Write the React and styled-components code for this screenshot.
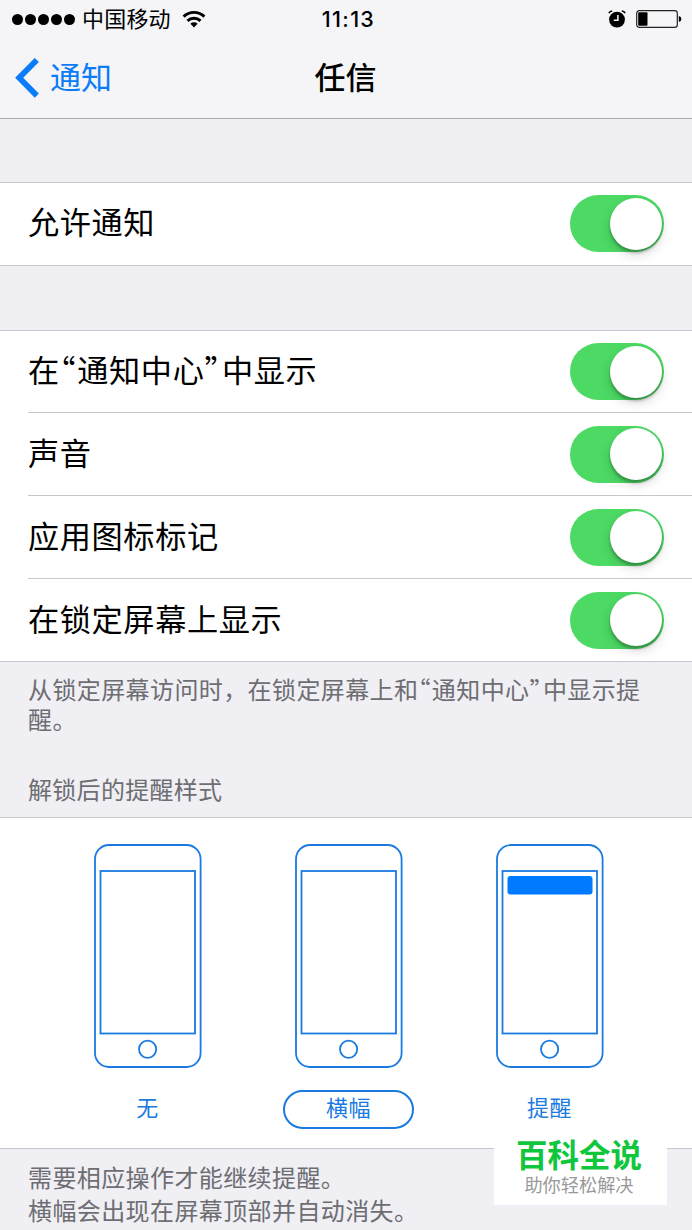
import React from 'react';
import { styled, createGlobalStyle } from 'styled-components';

const GlobalStyle = createGlobalStyle`
  * {
    box-sizing: border-box;
  }
  body {
    margin: 0;
    background: #efeff4;
    color: #000;
    font-family: 'Noto Sans CJK SC', sans-serif;
  }
`;

const displayOptions = [
  { id: 'center', label: '在“通知中心”中显示' },
  { id: 'sound', label: '声音' },
  { id: 'badge', label: '应用图标标记' },
  { id: 'lock', label: '在锁定屏幕上显示' },
];

const alertStyles = [
  { id: 'none', label: '无' },
  { id: 'banner', label: '横幅', selected: true },
  { id: 'alert', label: '提醒', banner: true },
];

// * 弯引号在中文字体里是全角，这里单独换成半角宽度
const QuotedText = ({ text }) =>
  text.split(/([“”])/).map((part, i) => (/[“”]/.test(part) ? <Quote key={i}>{part}</Quote> : part));

const WifiIcon = () => (
  <svg width="24" height="18" viewBox="0 0 24 18" fill="none" stroke="#000" strokeWidth="2.9">
    <path d="M1.6 6.6a15 15 0 0 1 20.8 0" />
    <path d="M5.5 10.9a9.4 9.4 0 0 1 13 0" />
    <path d="M12 17.4l-3.6-3.6a5.2 5.2 0 0 1 7.2 0z" fill="#000" stroke="none" />
  </svg>
);

const AlarmIcon = () => (
  <svg width="18" height="18" viewBox="0 0 18 18" fill="none">
    <circle cx="9" cy="9.6" r="7.9" fill="#000" />
    <path d="M0.8 3.2Q1.9 1.2 4.2 0.9M17.2 3.2Q16.1 1.2 13.8 0.9" stroke="#000" strokeWidth="1.5" />
    <path d="M9.9 5v5.2H5.8" stroke="#f5f5f7" strokeWidth="1.5" />
  </svg>
);

const BatteryIcon = () => (
  <svg width="46" height="18" viewBox="0 0 46 18" fill="none">
    <rect x="0.7" y="0.7" width="40.6" height="16.6" rx="2.6" stroke="#222" strokeWidth="1.2" />
    <rect x="2.2" y="2.2" width="9.3" height="13.6" rx="1" fill="#000" />
    <path d="M42.8 6q2.6.6 2.6 3t-2.6 3z" fill="#000" />
  </svg>
);

const BackIcon = () => (
  <svg width="24" height="40" viewBox="0 0 24 40" fill="none" stroke="#0a7cf8" strokeWidth="5.8">
    <path d="M21.8 2L4.2 19.8l17.6 17.8" />
  </svg>
);

const PhoneIcon = ({ banner }) => (
  <svg width="108" height="224" viewBox="0 0 108 224" fill="none" stroke="#1a7ae0" strokeWidth="1.8">
    <rect x="1" y="1" width="105.6" height="222" rx="14" />
    <rect x="6.5" y="27" width="94.5" height="162.5" />
    <circle cx="53.6" cy="205.2" r="8.6" />
    {banner && <rect x="11.5" y="32" width="85" height="18.5" rx="3" fill="#007aff" stroke="none" />}
  </svg>
);

const ToggleRow = ({ label }) => (
  <RowDiv>
    <RowLabel>
      <QuotedText text={label} />
    </RowLabel>
    <SwitchButton type="button" role="switch" aria-checked="true" aria-label={label}>
      <Knob />
    </SwitchButton>
  </RowDiv>
);

const App = () => {
  return (
    <Page>
      <GlobalStyle />
      <Header>
        <StatusBar>
          <CarrierDiv>
            <SignalDiv>
              {[1, 2, 3, 4, 5].map((n) => (
                <Dot key={n} />
              ))}
            </SignalDiv>
            <span>中国移动</span>
            <WifiIcon />
          </CarrierDiv>
          <Time>11:13</Time>
          <BatteryDiv>
            <AlarmIcon />
            <BatteryIcon />
          </BatteryDiv>
        </StatusBar>
        <NavBar>
          <BackButton type="button">
            <BackIcon />
            <span>通知</span>
          </BackButton>
          <Title>任信</Title>
        </NavBar>
      </Header>

      <AllowGroup>
        <ToggleRow label="允许通知" />
      </AllowGroup>

      <OptionGroup>
        {displayOptions.map((item) => (
          <ToggleRow key={item.id} label={item.label} />
        ))}
      </OptionGroup>

      <GroupNote>
        <QuotedText text="从锁定屏幕访问时，在锁定屏幕上和“通知中心”中显示提醒。" />
      </GroupNote>
      <GroupTitle>解锁后的提醒样式</GroupTitle>

      <StyleGroup>
        {alertStyles.map((item) => (
          <StyleOption key={item.id}>
            <PhoneIcon banner={item.banner} />
            <StyleLabel $selected={item.selected}>{item.label}</StyleLabel>
          </StyleOption>
        ))}
      </StyleGroup>

      <BottomNote>
        <p>需要相应操作才能继续提醒。</p>
        <p>横幅会出现在屏幕顶部并自动消失。</p>
      </BottomNote>

      <Watermark>
        <WatermarkName>百科全说</WatermarkName>
        <WatermarkSlogan>助你轻松解决</WatermarkSlogan>
      </Watermark>
    </Page>
  );
};

export default App;

const Page = styled.div`
  position: relative;
  width: 692px;
  height: 1230px;
  overflow: hidden;
  background: #efeff4;
`;

const Header = styled.header`
  height: 119px;
  background: #f5f5f7;
  border-bottom: 1px solid #acacae;
`;

const StatusBar = styled.div`
  height: 38px;
  padding: 0 10px 0 12px;
  display: grid;
  grid-template-columns: 1fr auto 1fr;
  align-items: center;
`;

const CarrierDiv = styled.div`
  display: flex;
  align-items: center;
  font-size: 22px;
  line-height: 34px;
  letter-spacing: 0.2px;
  & span {
    margin: 0 11px 0 7px;
    padding-bottom: 4px;
  }
`;

const SignalDiv = styled.div`
  display: flex;
  gap: 2px;
`;

const Dot = styled.i`
  width: 11px;
  height: 11px;
  border-radius: 50%;
  background: #000;
`;

const Time = styled.div`
  padding-left: 3px;
  font-family: Inter, sans-serif;
  font-size: 21.5px;
  font-weight: 500;
  line-height: 38px;
  letter-spacing: 1.3px;
`;

const BatteryDiv = styled.div`
  display: flex;
  justify-content: flex-end;
  align-items: center;
  gap: 10px;
`;

const NavBar = styled.nav`
  height: 80px;
  padding: 0 16px 0 15px;
  display: grid;
  grid-template-columns: 1fr auto 1fr;
  align-items: center;
`;

const BackButton = styled.button`
  padding: 0;
  display: flex;
  align-items: center;
  gap: 11px;
  border: none;
  background: none;
  color: #0a7cf8;
  font-family: inherit;
  font-size: 31px;
  line-height: 40px;
  cursor: pointer;
  & span {
    padding-bottom: 4px;
  }
`;

const Title = styled.h1`
  margin: 0;
  padding-bottom: 4px;
  font-size: 31px;
  font-weight: 500;
  line-height: 40px;
`;

const Group = styled.section`
  border-top: 1px solid #c8c7cc;
  border-bottom: 1px solid #c8c7cc;
  background: #fff;
`;

const RowDiv = styled.div`
  height: 83px;
  margin-left: 28px;
  padding-right: 28px;
  display: flex;
  justify-content: space-between;
  align-items: center;
  & + & {
    border-top: 1px solid #c8c7cc;
  }
`;

const AllowGroup = styled(Group)`
  margin-top: 63px;
  ${RowDiv} {
    height: 82px;
    padding-bottom: 1px;
  }
`;

const OptionGroup = styled(Group)`
  margin-top: 64px;
  ${RowDiv}:first-child {
    height: 81px;
  }
`;

const RowLabel = styled.span`
  padding-bottom: 5px;
  font-size: 31.2px;
  line-height: 44px;
  letter-spacing: 0.6px;
`;

const Quote = styled.span`
  font-feature-settings: 'halt';
  letter-spacing: 0.06em;
`;

const SwitchButton = styled.button`
  width: 94px;
  height: 57px;
  padding: 0 2px;
  display: flex;
  justify-content: flex-end;
  align-items: center;
  border: none;
  border-radius: 29px;
  background: #4cd964;
  cursor: pointer;
`;

const Knob = styled.span`
  width: 52px;
  height: 52px;
  border-radius: 50%;
  background: #fff;
  box-shadow: 0 3px 3px rgba(0, 0, 0, 0.25), 0 5px 12px rgba(0, 0, 0, 0.14);
`;

const GroupNote = styled.p`
  margin: 0;
  padding: 12px 28px 0;
  color: #6d6d72;
  font-size: 24px;
  line-height: 30px;
  letter-spacing: 0.4px;
`;

const GroupTitle = styled.h2`
  margin: 0;
  padding: 40px 28px 0;
  color: #6d6d72;
  font-size: 24px;
  font-weight: 400;
  line-height: 30px;
  letter-spacing: 0.3px;
`;

const StyleGroup = styled(Group)`
  height: 332px;
  margin-top: 13px;
  padding: 26px 41px 0 47px;
  display: grid;
  grid-template-columns: repeat(3, 201px);
`;

const StyleOption = styled.div`
  display: flex;
  flex-direction: column;
  align-items: center;
  gap: 22px;
`;

const StyleLabel = styled.button`
  width: 131px;
  height: 39px;
  padding: 0 0 7px;
  border: 2px solid ${({ $selected }) => ($selected ? '#1a7ae0' : 'transparent')};
  border-radius: 20px;
  background: none;
  color: #1a7ae0;
  font-family: inherit;
  font-size: 22px;
  line-height: 28px;
  letter-spacing: 0.4px;
  cursor: pointer;
`;

const BottomNote = styled.div`
  padding: 11px 28px 0;
  color: #6d6d72;
  font-size: 24px;
  line-height: 33px;
  letter-spacing: 0.4px;
  & p {
    margin: 0;
  }
`;

const Watermark = styled.div`
  position: absolute;
  right: 25px;
  bottom: 25px;
  width: 173px;
  height: 72px;
  padding-right: 3px;
  display: flex;
  flex-direction: column;
  align-items: center;
  background: #fff;
`;

const WatermarkName = styled.strong`
  color: #10c63c;
  font-size: 31.5px;
  font-weight: 700;
  line-height: 40px;
`;

const WatermarkSlogan = styled.span`
  color: #999;
  font-size: 18.2px;
  line-height: 22px;
`;
